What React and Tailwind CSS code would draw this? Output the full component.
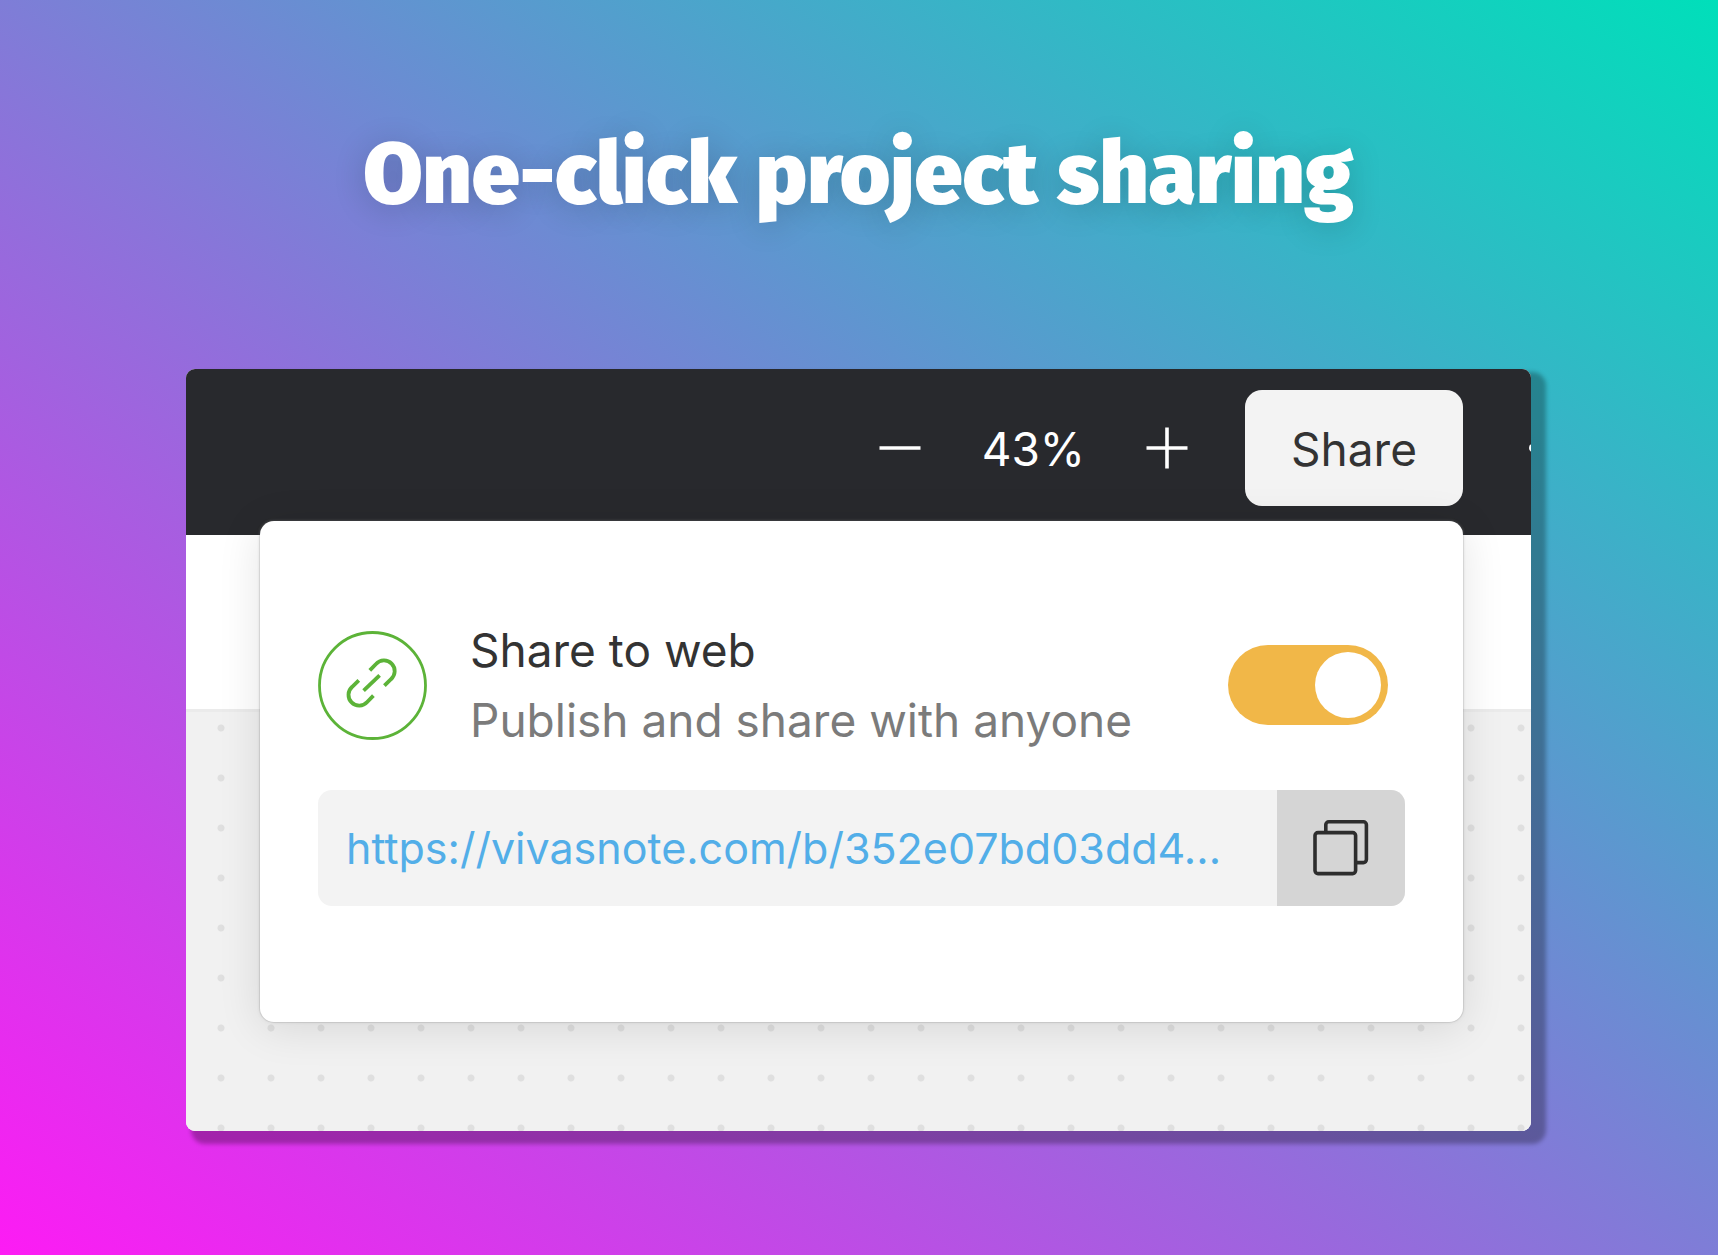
import { useState } from 'react';

function ZoomControls() {
  return (
    <div className="flex items-center gap-[61px] text-white">
      <button type="button" aria-label="Zoom out" className="flex h-[42px] w-[42px] items-center justify-center">
        <svg width="42" height="42" viewBox="0 0 42 42" fill="none" stroke="currentColor" strokeWidth="3.6">
          <path d="M0.500 21h41" />
        </svg>
      </button>
      <span className="pt-[2px] text-[46px] leading-[56px]">43%</span>
      <button type="button" aria-label="Zoom in" className="flex h-[42px] w-[42px] items-center justify-center">
        <svg width="42" height="42" viewBox="0 0 42 42" fill="none" stroke="currentColor" strokeWidth="3.6">
          <path d="M0.5 21h41M21 0.5v41" />
        </svg>
      </button>
    </div>
  );
}

function Toolbar() {
  return (
    <header className="flex h-[166px] items-center justify-end bg-[#28292d] pb-[8px]">
      <ZoomControls />
      <button
        type="button"
        className="ml-[57px] h-[116px] w-[218px] rounded-[17px] bg-[#f3f3f3] pt-[2px] text-[46px] text-[#333333]"
      >
        Share
      </button>
      <button type="button" aria-label="More" className="w-[68px] overflow-hidden pl-[66px] text-white">
        <svg width="8" height="8" viewBox="0 0 8 8" fill="currentColor" className="max-w-none">
          <circle cx="4" cy="4" r="4" />
        </svg>
      </button>
    </header>
  );
}

function LinkBadge() {
  return (
    <svg width="109" height="109" viewBox="0 0 109 109" fill="none" stroke="#5cb338" className="flex-none">
      <circle cx="54.5" cy="54.5" r="53" strokeWidth="2.8" />
      <g strokeWidth="3.8">
        <path d="M51.8 39.4L58 33A10.7 10.7 0 1 1 73 48.2L66.4 54.6" />
        <path d="M55.4 64.6L49.2 71A10.7 10.7 0 1 1 34.2 55.8L40.8 49.4" />
        <path d="M45.6 59.7L61.6 44.3" />
      </g>
    </svg>
  );
}

function CopyIcon() {
  return (
    <svg width="56" height="56" viewBox="0 0 56 56" fill="none" stroke="#2d2d2d" strokeWidth="3.6">
      <rect x="2" y="12.6" width="40.6" height="41" rx="3" />
      <path d="M12.8 12.6V4.8a3 3 0 0 1 3-3H50.4a3 3 0 0 1 3 3V39.6a3 3 0 0 1-3 3H42.6" />
    </svg>
  );
}

function SharePanel() {
  const [published, setPublished] = useState(true);
  return (
    <section
      aria-label="Share"
      className="absolute top-[152px] right-[68px] left-[74px] rounded-[14px] bg-white px-[58px] pt-[94px] pb-[116px] shadow-[0_0_0_1px_rgba(0,0,0,0.06),0_0_3px_rgba(160,160,160,0.5),0_6px_44px_rgba(0,0,0,0.11)]"
    >
      <div className="flex items-center gap-[43px] pr-[17px]">
        <LinkBadge />
        <div className="flex-1 text-[46px] leading-[70px]">
          <h2 id="share-title" className="text-[#333333]">Share to web</h2>
          <p id="share-hint" className="text-[#7b7b7b]">Publish and share with anyone</p>
        </div>
        <input
          type="checkbox"
          role="switch"
          aria-labelledby="share-title"
          aria-describedby="share-hint"
          checked={published}
          onChange={(e) => setPublished(e.target.checked)}
          className="flex h-[80px] w-[160px] flex-none cursor-pointer appearance-none items-center justify-start rounded-full bg-[#cccccc] px-[7px] before:h-[66px] before:w-[66px] before:rounded-full before:bg-white before:content-[''] checked:justify-end checked:bg-[#f1b748]"
        />
      </div>
      <div className="mt-[35px] flex h-[116px] overflow-hidden rounded-[14px] bg-[#f3f3f3]">
        <input
          type="text"
          readOnly
          aria-label="Public link"
          value="https://vivasnote.com/b/352e07bd03dd4..."
          className="min-w-0 flex-1 bg-transparent px-[28px] text-[43px] text-[#52aee8] outline-none"
        />
        <button
          type="button"
          aria-label="Copy link"
          className="flex w-[128px] flex-none items-center justify-center bg-[#d5d5d5]"
        >
          <CopyIcon />
        </button>
      </div>
    </section>
  );
}

export default function App() {
  return (
    <main className="flex min-h-screen flex-col bg-[linear-gradient(to_top_right,#fd1bf4,#00dfba)] pt-[122px] pr-[187px] pb-[124px] pl-[186px] font-[Inter,sans-serif]">
      <h1 className="text-center font-['Fira_Sans','Open_Sans',sans-serif] text-[86px] leading-[106px] font-black text-white [text-shadow:0_4px_32px_rgba(0,0,0,0.18)]">
        One-click project sharing
      </h1>
      <div className="relative mt-[141px] flex flex-1 flex-col rounded-[9px] shadow-[10px_8px_4px_5px_rgba(0,0,0,0.28)]">
        <div className="flex flex-1 flex-col overflow-hidden rounded-[9px] bg-white">
          <Toolbar />
          <div className="h-[177px] border-b-[3px] border-[#ebebeb] bg-white" />
          <div className="min-h-[419px] flex-1 bg-[#f1f1f1] bg-[radial-gradient(circle,#dfdfdf_3px,transparent_4px)] bg-size-[50px_50px] bg-position-[10px_-9px]" />
        </div>
        <SharePanel />
      </div>
    </main>
  );
}
